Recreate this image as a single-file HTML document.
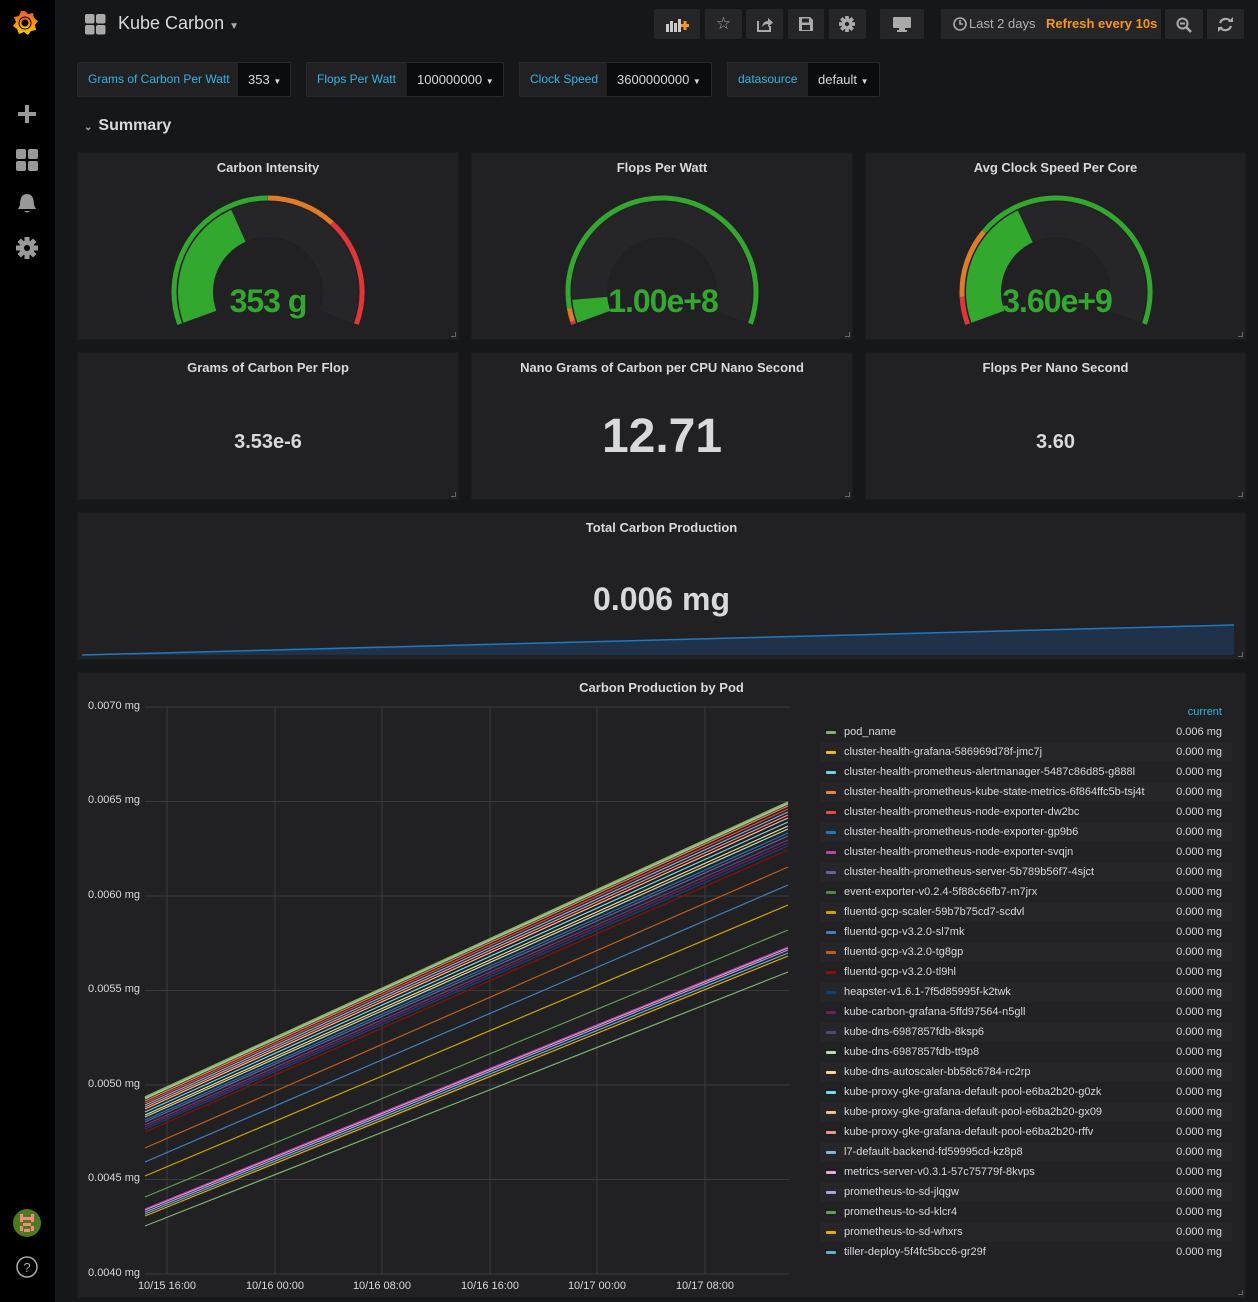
<!DOCTYPE html>
<html><head><meta charset="utf-8"><style>
*{box-sizing:border-box;margin:0;padding:0}
body{width:1258px;height:1302px;background:#161719;font-family:"Liberation Sans",sans-serif;color:#d8d9da;position:relative;overflow:hidden}
.a{position:absolute}
.side{left:0;top:0;width:56px;height:1302px;background:#000;border-right:1px solid #1a1a1a}
.btn{position:absolute;top:9px;height:30px;background:#262628;border-radius:2px}
.var{position:absolute;top:62px;height:35px;background:#212124;border:1px solid #2a2a2c;border-radius:2px;font-size:12px;}
.var .l{position:absolute;top:0;height:33px;line-height:33px;color:#33b5e5;padding-left:10px}
.var .v{position:absolute;top:0;height:33px;line-height:33px;background:#0b0c0e;color:#d8d9da;padding-left:10px;font-size:13px}
.panel{position:absolute;background:#212124;border:1px solid #1c1c1e}
.pt{position:absolute;left:0;right:0;top:7px;text-align:center;font-size:13px;font-weight:bold;color:#d8d9da}
.corner{position:absolute;right:2px;bottom:2px;width:5px;height:5px;border-right:1px solid #666;border-bottom:1px solid #666}
.lg{position:absolute;left:820px;width:412px;height:20px;font-size:11px;line-height:20px}
.lg .s{position:absolute;left:6px;top:9px;width:10px;height:3px;border-radius:1px}
.lg .n{position:absolute;left:24px;color:#d8d9da}
.lg .val{position:absolute;right:10px;color:#d8d9da}
.yl{position:absolute;left:80px;width:60px;text-align:right;font-size:11px;color:#d8d9da}
.xl{position:absolute;top:1280px;width:80px;text-align:center;font-size:11px;color:#d8d9da}
</style></head><body>

<div class="a side"></div>
<!-- grafana logo -->
<svg class="a" style="left:10px;top:8px" width="30" height="30" viewBox="0 0 30 30">
<defs><linearGradient id="lg1" x1="0" y1="1" x2="0" y2="0"><stop offset="0" stop-color="#fbca0a"/><stop offset="1" stop-color="#f05a28"/></linearGradient></defs>
<path d="M15 3 L18 6 L23 5 L24 10 L28 13 L25 17 L26 22 L21 23 L18 27 L14 24 L9 26 L7 21 L3 18 L6 14 L4 9 L9 8 L11 3 Z" fill="url(#lg1)"/>
<circle cx="15" cy="15" r="6.5" fill="#000"/>
<circle cx="15" cy="15" r="4.5" fill="none" stroke="url(#lg1)" stroke-width="2"/>
<circle cx="15" cy="15" r="1.8" fill="#000"/>
</svg>
<!-- sidebar icons -->
<svg class="a" style="left:18px;top:105px" width="18" height="18"><rect x="7" y="0" width="4" height="18" fill="#999"/><rect x="0" y="7" width="18" height="4" fill="#999"/></svg>
<svg class="a" style="left:16px;top:149px" width="22" height="22"><rect x="0" y="0" width="10" height="10" rx="2" fill="#999"/><rect x="12" y="0" width="10" height="10" rx="2" fill="#999"/><rect x="0" y="12" width="10" height="10" rx="2" fill="#999"/><rect x="12" y="12" width="10" height="10" rx="2" fill="#999"/></svg>
<svg class="a" style="left:17px;top:193px" width="20" height="22"><path d="M10 1 C4 1 3 7 3 12 L1 16 L19 16 L17 12 C17 7 16 1 10 1Z" fill="#999"/><path d="M7 18 Q10 21 13 18Z" fill="#999"/></svg>
<svg class="a" style="left:16px;top:237px" width="22" height="22" viewBox="0 0 22 22"><g fill="#999" transform="translate(11 11)"><rect x="-2.5" y="-11" width="5" height="22"/><rect x="-2.5" y="-11" width="5" height="22" transform="rotate(45)"/><rect x="-2.5" y="-11" width="5" height="22" transform="rotate(90)"/><rect x="-2.5" y="-11" width="5" height="22" transform="rotate(135)"/><circle r="7.5"/></g><circle cx="11" cy="11" r="3" fill="#000"/></svg>
<svg class="a" style="left:13px;top:1209px" width="28" height="28"><circle cx="14" cy="14" r="14" fill="#4e7a1e"/><g fill="#f28b82"><rect x="7" y="5" width="3" height="8"/><rect x="18" y="5" width="3" height="8"/><rect x="10" y="8" width="8" height="3"/><rect x="10" y="14" width="8" height="3"/><rect x="7" y="17" width="3" height="5"/><rect x="18" y="17" width="3" height="5"/><rect x="11" y="20" width="6" height="3"/></g></svg>
<svg class="a" style="left:16px;top:1256px" width="22" height="22"><circle cx="11" cy="11" r="10" fill="none" stroke="#aaa" stroke-width="1.5"/><text x="11" y="16" font-size="13" text-anchor="middle" fill="#aaa" font-family="Liberation Sans">?</text></svg>

<!-- header -->
<svg class="a" style="left:85px;top:14px" width="21" height="21"><rect x="0" y="0" width="9.5" height="9.5" rx="2" fill="#aaa"/><rect x="11" y="0" width="9.5" height="9.5" rx="2" fill="#aaa"/><rect x="0" y="11" width="9.5" height="9.5" rx="2" fill="#aaa"/><rect x="11" y="11" width="9.5" height="9.5" rx="2" fill="#aaa"/></svg>
<div class="a" style="left:118px;top:13px;font-size:18px;color:#d8d9da">Kube Carbon <span style="font-size:10px;color:#aaa">▼</span></div>

<div class="btn" style="left:654px;width:46px"><svg class="a" style="left:12px;top:8px" width="24" height="16"><g fill="#ccc"><rect x="0" y="7" width="3" height="8"/><rect x="4" y="4" width="3" height="11"/><rect x="8" y="6" width="3" height="9"/><rect x="12" y="2" width="3" height="13"/></g><g fill="#f79520"><rect x="15" y="7" width="8" height="3"/><rect x="17.5" y="4" width="3" height="9"/></g></svg></div>
<div class="btn" style="left:705px;width:37px;text-align:center;line-height:30px;color:#aaa;font-size:17px">☆</div>
<div class="btn" style="left:746px;width:37px"><svg class="a" style="left:11px;top:8px" width="16" height="15"><path d="M1 4 L1 14 L13 14 L13 9" fill="none" stroke="#aaa" stroke-width="2"/><path d="M5 10 Q6 4 11 4 L11 1 L16 5.5 L11 10 L11 7 Q7 7 5 10Z" fill="#aaa"/></svg></div>
<div class="btn" style="left:788px;width:36px"><svg class="a" style="left:11px;top:8px" width="14" height="14"><path d="M0 0 H11 L14 3 V14 H0Z" fill="#aaa"/><rect x="3" y="1.5" width="7" height="4" fill="#262628"/><rect x="3" y="8" width="8" height="5" fill="#262628"/></svg></div>
<div class="btn" style="left:829px;width:37px"><svg class="a" style="left:10px;top:7px" width="16" height="16" viewBox="0 0 22 22"><g fill="#aaa" transform="translate(11 11)"><rect x="-2.5" y="-11" width="5" height="22"/><rect x="-2.5" y="-11" width="5" height="22" transform="rotate(45)"/><rect x="-2.5" y="-11" width="5" height="22" transform="rotate(90)"/><rect x="-2.5" y="-11" width="5" height="22" transform="rotate(135)"/><circle r="7.5"/></g><circle cx="11" cy="11" r="3" fill="#262628"/></svg></div>
<div class="btn" style="left:880px;width:44px"><svg class="a" style="left:13px;top:8px" width="18" height="15"><rect x="0" y="0" width="18" height="11" rx="1" fill="#aaa"/><rect x="6" y="11" width="6" height="2" fill="#aaa"/><rect x="4" y="13" width="10" height="2" fill="#aaa"/></svg></div>
<div class="btn" style="left:941px;width:220px;font-size:13px;line-height:30px"><svg class="a" style="left:12px;top:8px" width="14" height="14"><circle cx="7" cy="7" r="6" fill="none" stroke="#aaa" stroke-width="1.6"/><path d="M7 3 V7 H10" fill="none" stroke="#aaa" stroke-width="1.6"/></svg><span class="a" style="left:28px;color:#b0b0b0">Last 2 days</span><span class="a" style="left:105px;color:#f79520;font-weight:bold">Refresh every 10s</span></div>
<div class="btn" style="left:1165px;width:38px"><svg class="a" style="left:11px;top:8px" width="16" height="16"><circle cx="6.5" cy="6.5" r="5" fill="none" stroke="#aaa" stroke-width="2"/><rect x="4" y="5.5" width="5" height="2" fill="#aaa"/><path d="M10 10 L15 15" stroke="#aaa" stroke-width="2.5"/></svg></div>
<div class="btn" style="left:1207px;width:37px"><svg class="a" style="left:10px;top:7px" width="17" height="17"><path d="M14 6 A6 6 0 0 0 3 7" fill="none" stroke="#aaa" stroke-width="2.2"/><path d="M11 6 L16 6 L16 1Z" fill="#aaa"/><path d="M3 11 A6 6 0 0 0 14 10" fill="none" stroke="#aaa" stroke-width="2.2"/><path d="M6 11 L1 11 L1 16Z" fill="#aaa"/></svg></div>

<!-- variables -->
<div class="var" style="left:77px;width:214px"><span class="l">Grams of Carbon Per Watt</span><span class="v" style="left:160px;width:52px">353 <span style="font-size:8px">▼</span></span></div>
<div class="var" style="left:306px;width:198px"><span class="l">Flops Per Watt</span><span class="v" style="left:100px;width:96px">100000000 <span style="font-size:8px">▼</span></span></div>
<div class="var" style="left:519px;width:193px"><span class="l">Clock Speed</span><span class="v" style="left:87px;width:104px">3600000000 <span style="font-size:8px">▼</span></span></div>
<div class="var" style="left:727px;width:153px"><span class="l">datasource</span><span class="v" style="left:80px;width:71px">default <span style="font-size:8px">▼</span></span></div>

<div class="a" style="left:84px;top:117px;font-size:16px;font-weight:bold;color:#d8d9da"><span style="font-size:10px;color:#aaa;margin-right:6px">⌄</span>Summary</div>

<!-- gauges -->
<div class="panel" style="left:77px;top:152px;width:382px;height:188px"><div class="pt">Carbon Intensity</div><div class="corner"></div></div>
<div class="panel" style="left:471px;top:152px;width:382px;height:188px"><div class="pt">Flops Per Watt</div><div class="corner"></div></div>
<div class="panel" style="left:865px;top:152px;width:381px;height:188px"><div class="pt">Avg Clock Speed Per Core</div><div class="corner"></div></div>
<svg class="a" style="left:0;top:0" width="1258" height="340">
<g fill="none">
 <!-- carbon -->
 <circle cx="268" cy="292" r="72.5" stroke="#262628" stroke-width="35" pathLength="360" stroke-dasharray="220 360" transform="rotate(-200 268 292)"/>
 <circle cx="268" cy="292" r="72.5" stroke="#33a82f" stroke-width="35" pathLength="360" stroke-dasharray="86 360" transform="rotate(-200 268 292)"/>
 <circle cx="268" cy="292" r="94" stroke="#33a82f" stroke-width="5" pathLength="360" stroke-dasharray="110 360" transform="rotate(-200 268 292)"/>
 <circle cx="268" cy="292" r="94" stroke="#e07b27" stroke-width="5" pathLength="360" stroke-dasharray="43 360" transform="rotate(-90 268 292)"/>
 <circle cx="268" cy="292" r="94" stroke="#e0363a" stroke-width="5" pathLength="360" stroke-dasharray="67 360" transform="rotate(-47 268 292)"/>
 <!-- flops -->
 <circle cx="662" cy="292" r="72.5" stroke="#262628" stroke-width="35" pathLength="360" stroke-dasharray="220 360" transform="rotate(-200 662 292)"/>
 <circle cx="662" cy="292" r="72.5" stroke="#33a82f" stroke-width="35" pathLength="360" stroke-dasharray="15 360" transform="rotate(-200 662 292)"/>
 <circle cx="662" cy="292" r="94" stroke="#e0363a" stroke-width="5" pathLength="360" stroke-dasharray="2 360" transform="rotate(-200 662 292)"/>
 <circle cx="662" cy="292" r="94" stroke="#e07b27" stroke-width="5" pathLength="360" stroke-dasharray="8 360" transform="rotate(-198 662 292)"/>
 <circle cx="662" cy="292" r="94" stroke="#33a82f" stroke-width="5" pathLength="360" stroke-dasharray="210 360" transform="rotate(-190 662 292)"/>
 <!-- clock -->
 <circle cx="1056" cy="292" r="72.5" stroke="#262628" stroke-width="35" pathLength="360" stroke-dasharray="220 360" transform="rotate(-200 1056 292)"/>
 <circle cx="1056" cy="292" r="72.5" stroke="#33a82f" stroke-width="35" pathLength="360" stroke-dasharray="85 360" transform="rotate(-200 1056 292)"/>
 <circle cx="1056" cy="292" r="94" stroke="#e0363a" stroke-width="5" pathLength="360" stroke-dasharray="17 360" transform="rotate(-200 1056 292)"/>
 <circle cx="1056" cy="292" r="94" stroke="#e07b27" stroke-width="5" pathLength="360" stroke-dasharray="43 360" transform="rotate(-183 1056 292)"/>
 <circle cx="1056" cy="292" r="94" stroke="#33a82f" stroke-width="5" pathLength="360" stroke-dasharray="160 360" transform="rotate(-140 1056 292)"/>
</g>
<g font-family="Liberation Sans" font-weight="bold" font-size="32" fill="#33a82f" text-anchor="middle" letter-spacing="-1">
 <text x="268" y="312">353 g</text>
 <text x="663" y="312">1.00e+8</text>
 <text x="1057" y="312">3.60e+9</text>
</g>
</svg>

<!-- stats -->
<div class="panel" style="left:77px;top:352px;width:382px;height:148px"><div class="pt">Grams of Carbon Per Flop</div><div class="a" style="left:0;right:0;top:430px;text-align:center;font-size:20px;font-weight:bold;top:78px">3.53e-6</div><div class="corner"></div></div>
<div class="panel" style="left:471px;top:352px;width:382px;height:148px"><div class="pt">Nano Grams of Carbon per CPU Nano Second</div><div class="a" style="left:0;right:0;top:56px;text-align:center;font-size:48px;font-weight:bold">12.71</div><div class="corner"></div></div>
<div class="panel" style="left:865px;top:352px;width:381px;height:148px"><div class="pt">Flops Per Nano Second</div><div class="a" style="left:0;right:0;top:78px;text-align:center;font-size:20px;font-weight:bold">3.60</div><div class="corner"></div></div>

<!-- total -->
<div class="panel" style="left:77px;top:512px;width:1169px;height:148px"><div class="pt">Total Carbon Production</div><div class="a" style="left:0;right:0;top:68px;text-align:center;font-size:32px;font-weight:bold">0.006 mg</div><div class="corner"></div></div>
<svg class="a" style="left:0;top:600px" width="1258" height="60"><path d="M82 55 L1234 25 L1234 55 Z" fill="#1f3550" opacity="0.85"/><path d="M82 55 L1234 25" stroke="#1f78c1" stroke-width="1.5"/></svg>

<!-- graph panel -->
<div class="panel" style="left:77px;top:672px;width:1169px;height:626px"><div class="pt">Carbon Production by Pod</div><div class="corner"></div></div>
<svg class="a" style="left:0;top:0" width="1258" height="1302">
<g stroke="#3a3a3c" stroke-width="1">
<line x1="145" y1="707" x2="789" y2="707"/><line x1="145" y1="801.5" x2="789" y2="801.5"/><line x1="145" y1="896" x2="789" y2="896"/><line x1="145" y1="990.5" x2="789" y2="990.5"/><line x1="145" y1="1085" x2="789" y2="1085"/><line x1="145" y1="1179.5" x2="789" y2="1179.5"/><line x1="145" y1="1274" x2="789" y2="1274"/>
<line x1="167" y1="707" x2="167" y2="1274"/><line x1="275" y1="707" x2="275" y2="1274"/><line x1="382" y1="707" x2="382" y2="1274"/><line x1="490" y1="707" x2="490" y2="1274"/><line x1="597" y1="707" x2="597" y2="1274"/><line x1="705" y1="707" x2="705" y2="1274"/>
</g>
<g stroke-width="1.2" fill="none">
<line x1="145" y1="1226" x2="788" y2="972" stroke="#7eb26d"/>
<line x1="145" y1="1216" x2="788" y2="956" stroke="#e5ac0e"/>
<line x1="145" y1="1214" x2="788" y2="953" stroke="#64b0c8"/>
<line x1="145" y1="1212" x2="788" y2="950" stroke="#aea2e0"/>
<line x1="145" y1="1210" x2="788" y2="948" stroke="#e5a8e2"/>
<line x1="145" y1="1209" x2="788" y2="947" stroke="#ba43a9"/>
<line x1="145" y1="1197" x2="788" y2="930" stroke="#629e51"/>
<line x1="145" y1="1176" x2="788" y2="905" stroke="#cca300"/>
<line x1="145" y1="1162" x2="788" y2="885" stroke="#447ebc"/>
<line x1="145" y1="1148" x2="788" y2="867" stroke="#c15c17"/>
<line x1="145" y1="1132" x2="788" y2="850" stroke="#890f02"/>
<line x1="145" y1="1129" x2="788" y2="846" stroke="#0a437c"/>
<line x1="145" y1="1127" x2="788" y2="843" stroke="#6d1f62"/>
<line x1="145" y1="1125" x2="788" y2="840" stroke="#584477"/>
<line x1="145" y1="1122" x2="788" y2="836" stroke="#705da0"/>
<line x1="145" y1="1120" x2="788" y2="833" stroke="#1f78c1"/>
<line x1="145" y1="1117" x2="788" y2="829" stroke="#b7dbab"/>
<line x1="145" y1="1115" x2="788" y2="826" stroke="#f4d598"/>
<line x1="145" y1="1112" x2="788" y2="822" stroke="#70dbed"/>
<line x1="145" y1="1109" x2="788" y2="818" stroke="#f9ba8f"/>
<line x1="145" y1="1107" x2="788" y2="815" stroke="#f29191"/>
<line x1="145" y1="1105" x2="788" y2="812" stroke="#82b5d8"/>
<line x1="145" y1="1103" x2="788" y2="809" stroke="#e24d42"/>
<line x1="145" y1="1101" x2="788" y2="806" stroke="#ef843c"/>
<line x1="145" y1="1099" x2="788" y2="804" stroke="#6ed0e0"/>
<line x1="145" y1="1098" x2="788" y2="803" stroke="#eab839"/>
<line x1="145" y1="1097" x2="788" y2="802" stroke="#7eb26d" stroke-width="1.6"/>
</g>
</svg>
<div class="yl" style="top:700px">0.0070 mg</div>
<div class="yl" style="top:794px">0.0065 mg</div>
<div class="yl" style="top:889px">0.0060 mg</div>
<div class="yl" style="top:983px">0.0055 mg</div>
<div class="yl" style="top:1078px">0.0050 mg</div>
<div class="yl" style="top:1172px">0.0045 mg</div>
<div class="yl" style="top:1267px">0.0040 mg</div>
<div class="xl" style="left:127px">10/15 16:00</div>
<div class="xl" style="left:235px">10/16 00:00</div>
<div class="xl" style="left:342px">10/16 08:00</div>
<div class="xl" style="left:450px">10/16 16:00</div>
<div class="xl" style="left:557px">10/17 00:00</div>
<div class="xl" style="left:665px">10/17 08:00</div>

<!-- legend -->
<div class="a" style="left:1160px;top:706px;width:62px;text-align:right;font-size:11px;color:#33b5e5">current</div>
<div class="lg" style="top:722px"><span class="s" style="background:#7eb26d"></span><span class="n">pod_name</span><span class="val">0.006 mg</span></div>
<div class="lg" style="top:742px;background:#262628"><span class="s" style="background:#eab839"></span><span class="n">cluster-health-grafana-586969d78f-jmc7j</span><span class="val">0.000 mg</span></div>
<div class="lg" style="top:762px"><span class="s" style="background:#6ed0e0"></span><span class="n">cluster-health-prometheus-alertmanager-5487c86d85-g888l</span><span class="val">0.000 mg</span></div>
<div class="lg" style="top:782px;background:#262628"><span class="s" style="background:#ef843c"></span><span class="n">cluster-health-prometheus-kube-state-metrics-6f864ffc5b-tsj4t</span><span class="val">0.000 mg</span></div>
<div class="lg" style="top:802px"><span class="s" style="background:#e24d42"></span><span class="n">cluster-health-prometheus-node-exporter-dw2bc</span><span class="val">0.000 mg</span></div>
<div class="lg" style="top:822px;background:#262628"><span class="s" style="background:#1f78c1"></span><span class="n">cluster-health-prometheus-node-exporter-gp9b6</span><span class="val">0.000 mg</span></div>
<div class="lg" style="top:842px"><span class="s" style="background:#ba43a9"></span><span class="n">cluster-health-prometheus-node-exporter-svqjn</span><span class="val">0.000 mg</span></div>
<div class="lg" style="top:862px;background:#262628"><span class="s" style="background:#705da0"></span><span class="n">cluster-health-prometheus-server-5b789b56f7-4sjct</span><span class="val">0.000 mg</span></div>
<div class="lg" style="top:882px"><span class="s" style="background:#508642"></span><span class="n">event-exporter-v0.2.4-5f88c66fb7-m7jrx</span><span class="val">0.000 mg</span></div>
<div class="lg" style="top:902px;background:#262628"><span class="s" style="background:#cca300"></span><span class="n">fluentd-gcp-scaler-59b7b75cd7-scdvl</span><span class="val">0.000 mg</span></div>
<div class="lg" style="top:922px"><span class="s" style="background:#447ebc"></span><span class="n">fluentd-gcp-v3.2.0-sl7mk</span><span class="val">0.000 mg</span></div>
<div class="lg" style="top:942px;background:#262628"><span class="s" style="background:#c15c17"></span><span class="n">fluentd-gcp-v3.2.0-tg8gp</span><span class="val">0.000 mg</span></div>
<div class="lg" style="top:962px"><span class="s" style="background:#890f02"></span><span class="n">fluentd-gcp-v3.2.0-tl9hl</span><span class="val">0.000 mg</span></div>
<div class="lg" style="top:982px;background:#262628"><span class="s" style="background:#0a437c"></span><span class="n">heapster-v1.6.1-7f5d85995f-k2twk</span><span class="val">0.000 mg</span></div>
<div class="lg" style="top:1002px"><span class="s" style="background:#6d1f62"></span><span class="n">kube-carbon-grafana-5ffd97564-n5gll</span><span class="val">0.000 mg</span></div>
<div class="lg" style="top:1022px;background:#262628"><span class="s" style="background:#584477"></span><span class="n">kube-dns-6987857fdb-8ksp6</span><span class="val">0.000 mg</span></div>
<div class="lg" style="top:1042px"><span class="s" style="background:#b7dbab"></span><span class="n">kube-dns-6987857fdb-tt9p8</span><span class="val">0.000 mg</span></div>
<div class="lg" style="top:1062px;background:#262628"><span class="s" style="background:#f4d598"></span><span class="n">kube-dns-autoscaler-bb58c6784-rc2rp</span><span class="val">0.000 mg</span></div>
<div class="lg" style="top:1082px"><span class="s" style="background:#70dbed"></span><span class="n">kube-proxy-gke-grafana-default-pool-e6ba2b20-g0zk</span><span class="val">0.000 mg</span></div>
<div class="lg" style="top:1102px;background:#262628"><span class="s" style="background:#f9ba8f"></span><span class="n">kube-proxy-gke-grafana-default-pool-e6ba2b20-gx09</span><span class="val">0.000 mg</span></div>
<div class="lg" style="top:1122px"><span class="s" style="background:#f29191"></span><span class="n">kube-proxy-gke-grafana-default-pool-e6ba2b20-rffv</span><span class="val">0.000 mg</span></div>
<div class="lg" style="top:1142px;background:#262628"><span class="s" style="background:#82b5d8"></span><span class="n">l7-default-backend-fd59995cd-kz8p8</span><span class="val">0.000 mg</span></div>
<div class="lg" style="top:1162px"><span class="s" style="background:#e5a8e2"></span><span class="n">metrics-server-v0.3.1-57c75779f-8kvps</span><span class="val">0.000 mg</span></div>
<div class="lg" style="top:1182px;background:#262628"><span class="s" style="background:#aea2e0"></span><span class="n">prometheus-to-sd-jlqgw</span><span class="val">0.000 mg</span></div>
<div class="lg" style="top:1202px"><span class="s" style="background:#629e51"></span><span class="n">prometheus-to-sd-klcr4</span><span class="val">0.000 mg</span></div>
<div class="lg" style="top:1222px;background:#262628"><span class="s" style="background:#e5ac0e"></span><span class="n">prometheus-to-sd-whxrs</span><span class="val">0.000 mg</span></div>
<div class="lg" style="top:1242px"><span class="s" style="background:#64b0c8"></span><span class="n">tiller-deploy-5f4fc5bcc6-gr29f</span><span class="val">0.000 mg</span></div>

</body></html>
